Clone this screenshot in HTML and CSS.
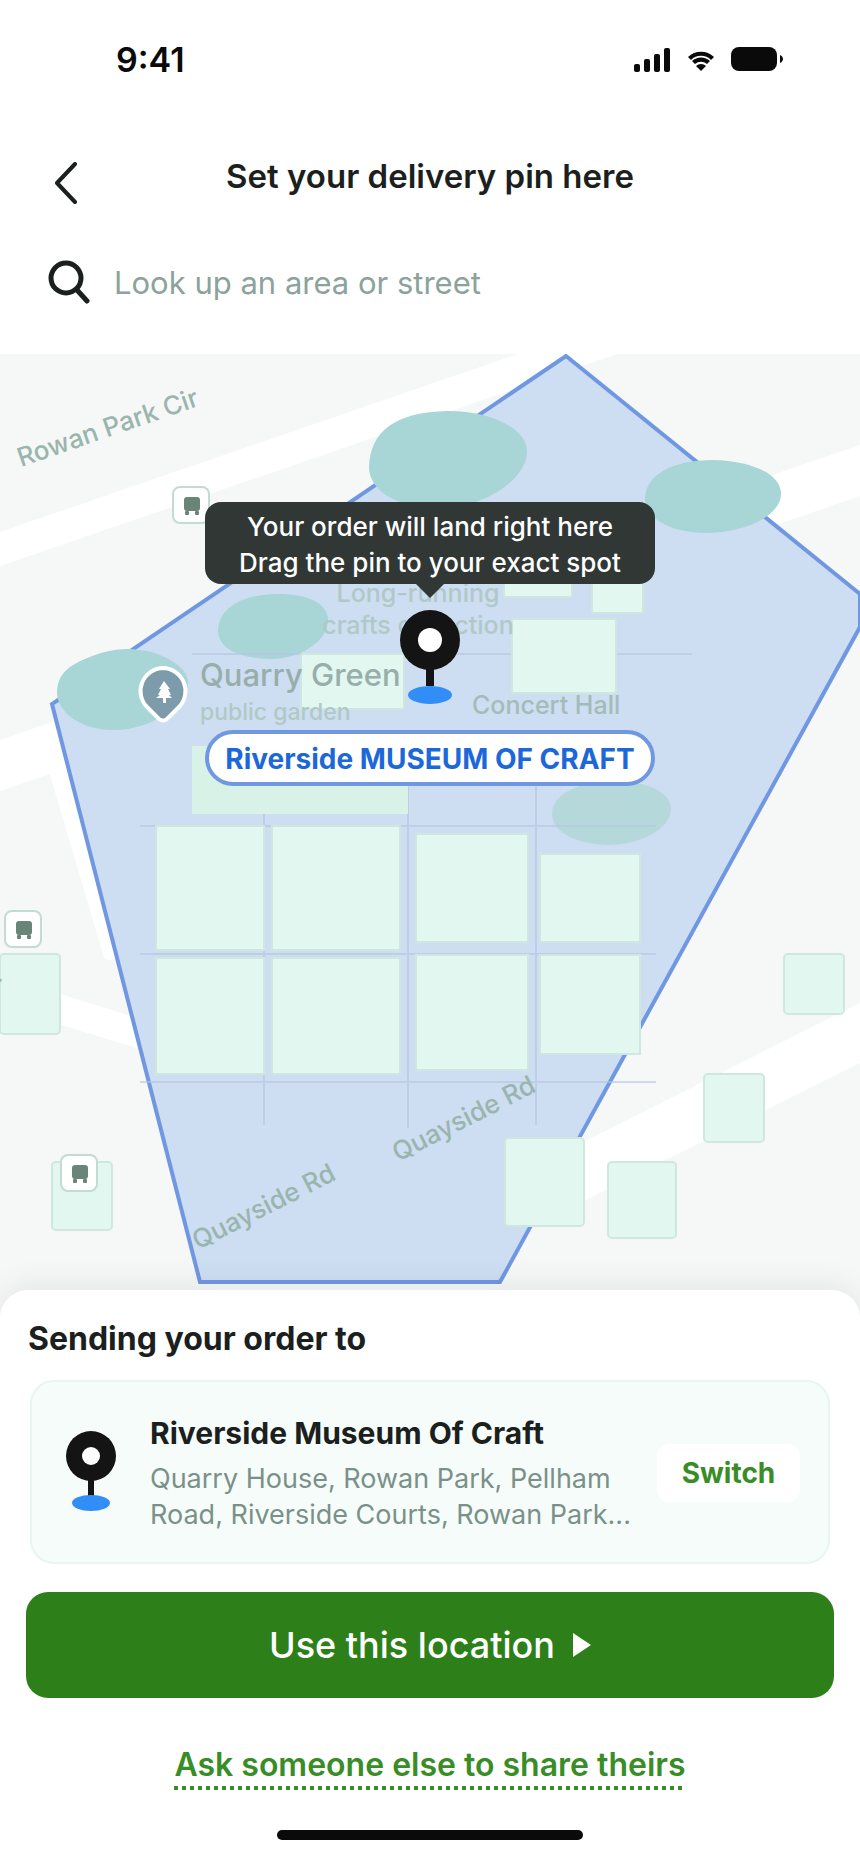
FILE: index.html
```html
<!DOCTYPE html>
<html lang="en">

<head>
    <meta charset="UTF-8">
    <meta name="viewport" content="width=device-width, initial-scale=1.0">
    <title>Set your delivery pin here</title>
    <link rel="stylesheet" href="styles.css">
</head>

<body>
    <header>
        <div class="status-bar">
            <span class="status-time">9:41</span>
            <svg class="status-icons" width="150" height="26" viewBox="0 0 150 26" aria-hidden="true">
                <rect x="0" y="18" width="6" height="8" rx="2" />
                <rect x="10" y="13" width="6" height="13" rx="2" />
                <rect x="20" y="8" width="6" height="18" rx="2" />
                <rect x="30" y="2" width="6" height="24" rx="2" />
                <path d="M54 11 A19 19 0 0 1 80 11 L77 14 A14 14 0 0 0 57 14 Z" />
                <path d="M58 15 A13 13 0 0 1 76 15 L73 18 A9 9 0 0 0 61 18 Z" />
                <path d="M62 20 A7 7 0 0 1 72 20 L67 25 Z" />
                <rect x="97" y="1" width="46" height="24" rx="8" />
                <path d="M146 9 C150 11 150 15 146 17 Z" />
            </svg>
        </div>
        <div class="title-bar">
            <button type="button" class="back-button" aria-label="Back">
                <svg width="24" height="42" viewBox="0 0 24 42">
                    <path d="M21 2 L3 21 L21 40" />
                </svg>
            </button>
            <h1>Set your delivery pin here</h1>
        </div>
        <form class="search">
            <label for="search" aria-label="Look up an area or street">
                <svg width="44" height="44" viewBox="0 0 44 44">
                    <circle cx="18" cy="18" r="15" />
                    <path d="M29 30 L39 41" />
                </svg>
            </label>
            <input type="text" id="search" name="search" placeholder="Look up an area or street">
        </form>
    </header>

    <main>
        <section class="map">
            <svg class="map-canvas" viewBox="0 354 860 964" preserveAspectRatio="xMidYMin slice">
                <defs>
                    <g id="bus">
                        <rect class="bus-box" x="1" y="1" width="36" height="36" rx="7" />
                        <rect x="12" y="11" width="16" height="14" rx="3" />
                        <rect x="13" y="25" width="4" height="4" rx="1" />
                        <rect x="23" y="25" width="4" height="4" rx="1" />
                    </g>
                </defs>

                <!-- roads -->
                <g class="roads">
                    <path d="M0 532 L518 354 L617 354 L0 566 Z" />
                    <path d="M0 740 L860 445 L860 496 L0 791 Z" />
                    <path d="M45 758 L104 957 Q106 961 114 960 L118 958 L80 758 Z" />
                    <path d="M0 975 L140 1019 L140 1049 L0 1006 Z" />
                    <path d="M500 1184 L860 1003 L860 1063 L500 1243 Z" />
                </g>

                <!-- delivery zone -->
                <path class="zone" d="M566 356 L860 594 L860 627 L500 1282 L200 1282 L52 704 Z" />

                <g class="trees">
                    <path d="M369 467 C370 432 394 412 448 411 C490 411 527 428 527 452 C527 475 492 507 440 508 C392 508 369 488 369 467 Z" />
                    <path d="M645 497 C647 474 673 460 713 460 C752 461 781 474 781 494 C781 516 744 533 705 533 C668 532 645 518 645 497 Z" />
                    <path d="M218 630 C219 606 246 594 278 594 C309 594 328 604 328 620 C328 640 302 659 270 659 C238 658 218 648 218 630 Z" />
                    <path d="M57 692 C58 670 74 663 95 655 C109 650 119 649 130 649 C163 650 188 668 188 682 C188 706 148 731 113 730 C82 730 57 713 57 692 Z" />
                    <path class="tree-light" d="M552 813 C553 794 577 781 619 781 C651 782 671 794 671 809 C671 829 639 845 608 845 C575 844 552 832 552 813 Z" />
                </g>

                <path class="lines" d="M192 654 H692 M140 826 H656 M140 954 H656 M140 1082 H656 M264 814 V1125 M408 786 V1128 M536 786 V1125" />

                <rect class="lawn" x="192" y="746" width="216" height="68" />

                <g class="buildings">
                    <rect x="504" y="560" width="68" height="37" rx="2" />
                    <rect x="592" y="560" width="51" height="53" rx="2" />
                    <rect x="301" y="654" width="103" height="55" rx="2" />
                    <rect x="512" y="619" width="104" height="74" rx="2" />
                    <rect x="156" y="826" width="108" height="124" />
                    <rect x="272" y="826" width="128" height="124" />
                    <rect x="416" y="834" width="112" height="108" />
                    <rect x="540" y="854" width="100" height="88" />
                    <rect x="156" y="958" width="108" height="116" />
                    <rect x="272" y="958" width="128" height="116" />
                    <rect x="416" y="955" width="112" height="115" />
                    <rect x="540" y="955" width="100" height="99" />
                    <rect x="505" y="1138" width="79" height="88" rx="4" />
                    <rect x="608" y="1162" width="68" height="76" rx="4" />
                    <rect x="704" y="1074" width="60" height="68" rx="4" />
                    <rect x="784" y="954" width="60" height="60" rx="4" />
                    <rect x="0" y="954" width="60" height="80" rx="4" />
                    <rect x="52" y="1162" width="60" height="68" rx="4" />
                </g>

                <g class="bus-stops">
                    <use href="#bus" x="172" y="486" />
                    <use href="#bus" x="4" y="910" />
                    <use href="#bus" x="60" y="1154" />
                </g>

                <g class="labels">
                    <text class="street" transform="translate(21 467) rotate(-19)">Rowan Park Cir</text>
                    <text class="street" transform="translate(198 1250) rotate(-27)">Quayside Rd</text>
                    <text class="street" transform="translate(398 1162) rotate(-27)">Quayside Rd</text>
                    <text class="street" x="-8" y="994">r</text>
                    <text class="place faint" x="418" y="602" text-anchor="middle">Long-running</text>
                    <text class="place faint" x="418" y="634" text-anchor="middle">crafts collection</text>
                    <text class="place-name" x="200" y="686">Quarry Green</text>
                    <text class="place-kind faint" x="200" y="720">public garden</text>
                    <text class="place" x="472" y="714">Concert Hall</text>
                </g>

                <!-- park marker -->
                <path class="park-marker" d="M163 668 A23 23 0 0 0 147 707 L159 719 Q163 722 167 719 L179 707 A23 23 0 0 0 163 668 Z" />
                <path class="park-tree" d="M164 681 L170 689 H168 L171 695 H169 L172 698 H166 V703 H163 V698 H156 L160 695 H158 L161 689 H159 Z" />
            </svg>

            <div class="drop-point">
                <p class="tooltip">Your order will land right here<br>Drag the pin to your exact spot</p>
                <svg class="pin" width="60" height="94" viewBox="0 0 60 94" aria-hidden="true">
                    <ellipse class="pin-base" cx="30" cy="85" rx="22" ry="9" />
                    <rect x="26" y="56" width="8" height="20" />
                    <circle cx="30" cy="30" r="30" />
                    <circle class="pin-hole" cx="30" cy="30" r="12" />
                </svg>
                <span class="place-chip">Riverside MUSEUM OF CRAFT</span>
            </div>
        </section>

        <section class="sheet">
            <h2>Sending your order to</h2>
            <div class="address-card">
                <svg class="card-pin" width="50" height="84" viewBox="0 0 50 84" aria-hidden="true">
                    <rect x="22" y="46" width="6" height="20" />
                    <ellipse class="pin-base" cx="25" cy="72" rx="19" ry="8" />
                    <circle cx="25" cy="25" r="25" />
                    <circle class="pin-hole" cx="25" cy="25" r="9" />
                </svg>
                <div class="address">
                    <h3>Riverside Museum Of Craft</h3>
                    <p>Quarry House, Rowan Park, Pellham<br>Road, Riverside Courts, Rowan Park...</p>
                </div>
                <button type="button" class="switch-button">Switch</button>
            </div>
            <button type="button" class="confirm-button">
                Use this location
                <svg width="18" height="24" viewBox="0 0 18 24" aria-hidden="true">
                    <path d="M0 0 L18 12 L0 24 Z" />
                </svg>
            </button>
            <a href="#" class="share-link">Ask someone else to share theirs</a>
            <div class="home-indicator"></div>
        </section>
    </main>
</body>

</html>
```

FILE: styles.css
```css
* {
    box-sizing: border-box;
}

body {
    margin: 0;
    font-family: Inter, "Liberation Sans", sans-serif;
    background-color: white;
    color: #1b1f1e;
}

h1,
h2,
h3,
p {
    margin: 0;
}

button {
    border: none;
    padding: 0;
    font-family: inherit;
    cursor: pointer;
}

/* Header */
.status-bar {
    display: flex;
    justify-content: space-between;
    align-items: center;
    height: 118px;
    padding: 0 76px 0 116px;
}

.status-time {
    font-size: 34px;
    font-weight: 600;
    color: #0a0a0a;
}

.status-icons {
    fill: #0a0a0a;
}

.title-bar {
    display: grid;
    grid-template-columns: 48px 1fr 48px;
    align-items: center;
    height: 116px;
    padding: 0 42px;
}

.back-button {
    display: flex;
    justify-content: center;
    padding-top: 14px;
    background: none;
}

.back-button svg,
.search svg {
    fill: none;
    stroke: #1b1f1e;
    stroke-width: 4;
    stroke-linecap: round;
    stroke-linejoin: round;
}

.search svg {
    stroke-width: 5;
}

h1 {
    font-size: 33px;
    font-weight: 600;
    text-align: center;
}

.search {
    display: flex;
    align-items: center;
    gap: 22px;
    height: 120px;
    padding: 0 48px 24px;
}

.search label {
    display: flex;
}

.search input {
    flex: 1;
    min-width: 0;
    border: none;
    outline: none;
    padding: 0;
    font-family: inherit;
    font-size: 31px;
    color: #1b1f1e;
}

.search input::placeholder {
    color: #8ba39b;
    opacity: 1;
}

/* Map */
.map {
    position: relative;
    height: 964px;
    overflow: hidden;
    background-color: #f6f8f7;
}

.map-canvas {
    display: block;
    width: 100%;
    height: 100%;
}

.roads {
    fill: white;
}

.zone {
    fill: #cdddf2;
    stroke: #7097e1;
    stroke-width: 4;
}

.trees {
    fill: #a8d5d6;
}

.trees .tree-light {
    fill: #b5d9db;
}

.lines {
    fill: none;
    stroke: #b6c4de;
    stroke-opacity: 0.6;
    stroke-width: 2;
}

.lawn {
    fill: #d8f2e8;
}

.buildings {
    fill: #e1f7ef;
    stroke: #cfe8df;
    stroke-width: 2;
}

.bus-stops {
    fill: #69857a;
}

.bus-box {
    fill: white;
    stroke: #c3dbd4;
    stroke-width: 2;
}

.labels {
    fill: #9ab5ad;
    font-weight: 500;
}

.street {
    font-size: 26px;
}

.place {
    font-size: 25px;
    fill: #a4bcb8;
}

.place-kind {
    font-size: 23px;
}

.faint {
    fill: #b0c9c7;
}

.place-name {
    font-size: 31px;
    fill: #98aeab;
}

.park-marker {
    fill: #7d9bab;
    stroke: white;
    stroke-width: 4;
}

.park-tree {
    fill: white;
}

.drop-point {
    position: absolute;
    top: 148px;
    left: 0;
    right: 0;
    display: flex;
    flex-direction: column;
    align-items: center;
    gap: 26px;
}

.tooltip {
    position: relative;
    width: 450px;
    padding: 7px 0 3px;
    border-radius: 16px;
    background-color: #313735;
    color: white;
    font-size: 26px;
    font-weight: 500;
    line-height: 36px;
    text-align: center;
}

.tooltip::after {
    content: "";
    position: absolute;
    top: 100%;
    left: 50%;
    margin-left: -14px;
    border: 14px solid transparent;
    border-top-color: #313735;
    border-bottom: none;
}

.pin,
.card-pin {
    fill: #141414;
}

.pin-base {
    fill: #318ef7;
}

.pin-hole {
    fill: white;
}

.place-chip {
    width: 450px;
    padding-top: 2px;
    border: 4px solid #7097e1;
    border-radius: 28px;
    background-color: white;
    color: #1d68d9;
    font-size: 28px;
    font-weight: 700;
    line-height: 46px;
    text-align: center;
}

/* Bottom sheet */
.sheet {
    position: relative;
    display: flex;
    flex-direction: column;
    margin-top: -28px;
    padding: 29px 26px 24px;
    border-radius: 28px 28px 0 0;
    background-color: white;
    box-shadow: 0 -4px 32px rgba(0, 0, 0, 0.08);
}

h2 {
    padding-left: 2px;
    font-size: 32px;
    font-weight: 700;
    line-height: 40px;
}

.address-card {
    display: flex;
    align-items: center;
    margin: 21px 4px 28px;
    padding: 31px 28px 29px 34px;
    border: 2px solid #e8f5f1;
    border-radius: 24px;
    background-color: #f6fcfa;
}

.address {
    flex: 1;
    padding-left: 34px;
}

h3 {
    font-size: 30px;
    font-weight: 700;
    line-height: 40px;
    margin-bottom: 8px;
}

.address p {
    color: #7a9189;
    font-size: 27px;
    line-height: 36px;
    white-space: nowrap;
}

.switch-button {
    width: 143px;
    height: 58px;
    border-radius: 12px;
    background-color: white;
    color: #398d26;
    font-size: 28px;
    font-weight: 700;
}

.confirm-button {
    display: flex;
    justify-content: center;
    align-items: center;
    gap: 18px;
    height: 106px;
    border-radius: 22px;
    background-color: #2d8019;
    color: white;
    font-size: 36px;
    font-weight: 500;
}

.confirm-button svg {
    fill: white;
}

.share-link {
    align-self: center;
    margin-top: 47px;
    padding-bottom: 5px;
    background: repeating-linear-gradient(90deg, #398d26 0 4px, transparent 4px 8px) bottom / 100% 4px no-repeat;
    color: #398d26;
    font-size: 32px;
    font-weight: 600;
    line-height: 40px;
    text-decoration: none;
}

.home-indicator {
    align-self: center;
    width: 306px;
    height: 10px;
    margin-top: 40px;
    border-radius: 5px;
    background-color: #0a0a0a;
}
```
